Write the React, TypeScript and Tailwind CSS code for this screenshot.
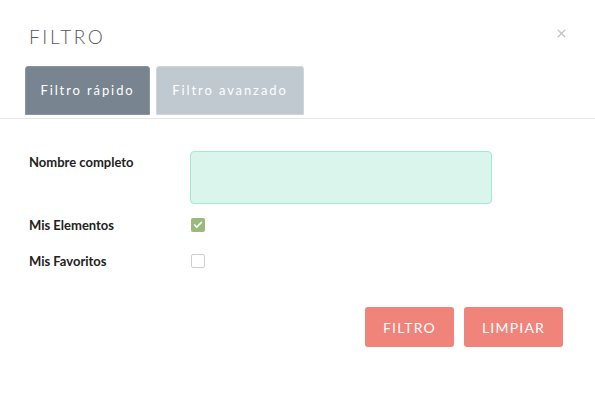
import { Check, X } from 'lucide-react';

export default function App() {
  return (
    <div className="w-[595px] h-[399px] bg-white font-['Lato','Liberation_Sans',sans-serif] text-[#222]">
      <div className="flex justify-between pl-[29px] pr-[27px] pt-[25px]">
        <h1 className="text-[19px] leading-6 tracking-[2.6px] text-[#5a5566] font-light">FILTRO</h1>
        <X className="h-[13px] w-[13px] mt-[2px] text-[#c4c4c4]" strokeWidth={2.6} />
      </div>

      <div className="mt-[17px] border-b border-[#e6e6e6] pb-[3px] pl-[25px] flex gap-[6px]">
        <button className="h-[49px] w-[125px] rounded-t-[3px] border border-[#8c969f] bg-[#78848f] text-[13px] tracking-[1.9px] text-white">
          Filtro rápido
        </button>
        <button className="h-[49px] w-[148px] rounded-t-[3px] border border-[#d0d6db] bg-[#c0c9d0] text-[13px] tracking-[1.9px] text-white">
          Filtro avanzado
        </button>
      </div>

      <div className="pl-[29px] pt-[32px]">
        <div className="flex">
          <label className="w-[161px] text-[13px] font-bold leading-4 pt-[3px]">Nombre completo</label>
          <div className="h-[53px] w-[302px] rounded-[4px] border border-[#a3ead4] bg-[#d9f5ec]" />
        </div>
        <div className="flex items-center mt-[13px]">
          <label className="w-[162px] text-[13px] font-bold leading-4">Mis Elementos</label>
          <span className="flex h-[14px] w-[14px] items-center justify-center rounded-[2px] bg-[#9aba7d]">
            <Check className="h-[10px] w-[10px] text-white" strokeWidth={4} />
          </span>
        </div>
        <div className="flex items-center mt-[20px]">
          <label className="w-[162px] text-[13px] font-bold leading-4">Mis Favoritos</label>
          <span className="h-[14px] w-[14px] rounded-[2px] border border-[#cfcfcf] bg-white" />
        </div>
      </div>

      <div className="flex justify-end gap-[10px] pr-[32px] mt-[38px]">
        <button className="h-[40px] w-[89px] rounded-[3px] bg-[#f0837a] text-[14px] tracking-[1.2px] text-white">
          FILTRO
        </button>
        <button className="h-[40px] w-[99px] rounded-[3px] bg-[#f0837a] text-[14px] tracking-[1.2px] text-white">
          LIMPIAR
        </button>
      </div>
    </div>
  );
}
